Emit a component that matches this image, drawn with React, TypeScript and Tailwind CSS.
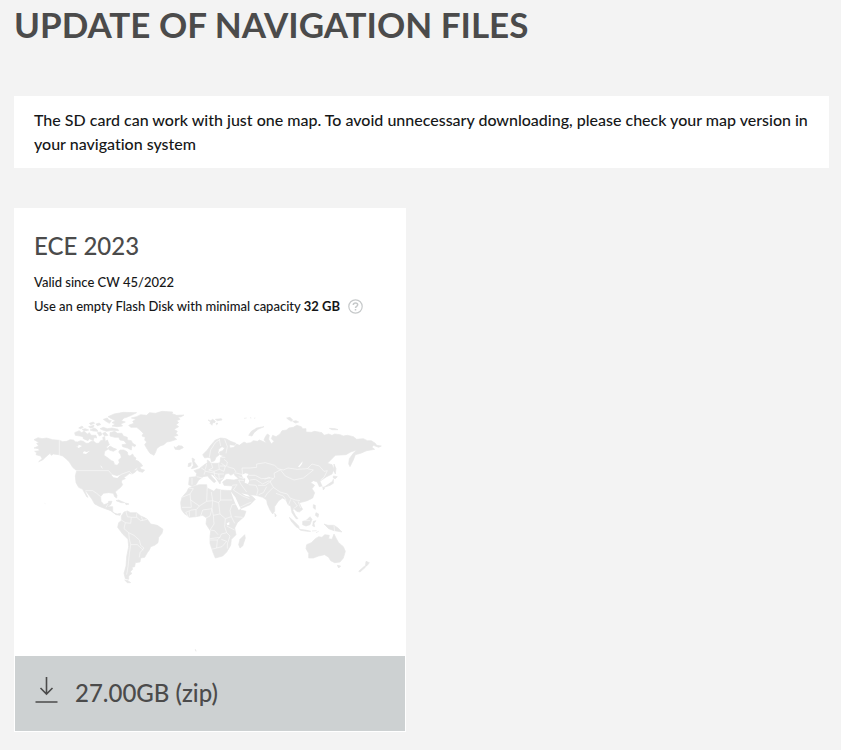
const land = [
  // Alaska, Canada
  "M42 119 L54 113 L66 116 L80 114 L98 119 L118 121 L128 125 L140 124 L150 119 L160 120 L166 125 L172 126 L182 122 L190 124 L198 130 L205 130 L214 124 L222 124 L228 130 L236 130 L242 122 L250 120 L248 112 L254 110 L256 124 L262 120 L268 134 L258 142 L266 146 L254 154 L252 166 L264 174 L274 182 L280 184 L284 194 L292 196 L298 188 L296 180 L304 172 L302 164 L296 156 L300 150 L312 150 L322 156 L324 166 L330 168 L338 162 L342 170 L348 174 L346 180 L356 184 L364 192 L368 198 L350 204 L338 212 L350 210 L346 216 L336 222 L328 220 L322 226 L312 232 L316 236 L306 240 L304 246 L308 254 L302 262 L292 270 L286 276 L291 286 L290 294 L284 290 L280 280 L266 278 L250 280 L242 290 L243 304 L252 314 L264 310 L266 304 L276 304 L272 314 L262 320 L278 320 L278 334 L284 340 L292 342 L302 340 L300 346 L288 344 L272 332 L256 326 L240 320 L224 312 L216 298 L200 276 L194 272 L204 292 L200 290 L188 268 L176 262 L168 248 L166 228 L170 212 L158 202 L148 186 L138 176 L128 168 L116 164 L100 162 L94 166 L90 160 L78 170 L68 180 L56 185 L66 176 L62 168 L48 164 L50 158 L44 154 L58 152 L56 146 L42 144 L56 138 L50 130 L58 128Z",
  // Arctic islands
  "M164 98 L178 92 L184 98 L192 94 L202 102 L198 108 L204 112 L190 110 L180 108 L166 106Z",
  "M188 104 L198 106 L208 98 L214 106 L228 106 L230 114 L222 112 L220 122 L208 116 L204 122 L190 116Z",
  "M176 84 L186 78 L190 82 L182 86Z",
  "M186 88 L196 86 L206 90 L194 93Z",
  "M206 80 L222 76 L220 82 L212 84Z",
  "M210 90 L222 84 L230 88 L234 94 L220 93Z",
  "M208 70 L220 66 L224 70 L212 74Z",
  "M228 72 L238 69 L242 74 L232 77Z",
  "M240 86 L250 82 L262 86 L276 84 L294 88 L296 92 L276 91 L260 94 L248 90Z",
  "M248 100 L256 97 L264 106 L254 108Z",
  "M232 98 L242 96 L246 104 L238 108Z",
  "M250 58 L262 54 L266 60 L274 62 L268 70 L258 64Z",
  "M264 50 L282 42 L310 37 L350 38 L334 46 L320 52 L312 54 L304 62 L316 66 L302 72 L308 78 L292 80 L276 78 L286 72 L276 68 L286 62 L274 56Z",
  "M270 98 L284 94 L292 100 L306 100 L310 108 L322 112 L322 120 L334 122 L338 130 L348 136 L344 140 L336 136 L334 150 L322 144 L308 140 L306 134 L320 132 L312 122 L300 120 L296 112 L284 112 L270 108Z",
  "M264 144 L270 138 L280 144 L290 148 L280 154 L268 150Z",
  "M350 208 L358 198 L364 208 L374 210 L368 217 L356 214Z",
  "M74 310 L76 311",
  // Greenland, Iceland
  "M326 76 L342 70 L338 64 L348 58 L334 54 L350 50 L362 44 L380 46 L388 38 L406 40 L426 34 L458 36 L456 41 L470 46 L492 45 L484 50 L474 52 L480 58 L470 62 L476 68 L468 74 L476 80 L462 88 L472 94 L468 100 L474 106 L460 110 L470 118 L452 124 L440 126 L432 134 L420 138 L410 146 L408 154 L402 166 L390 160 L382 148 L374 134 L380 126 L374 120 L376 112 L366 108 L370 100 L360 90 L350 82 L332 82Z",
  "M462 140 L468 143 L474 137 L486 138 L490 143 L478 149 L466 148Z",
  // Caribbean
  "M288 302 L296 300 L304 304 L314 308 L304 308Z",
  "M316 309 L327 312 L318 314Z",
  // South America
  "M304 348 L312 336 L322 333 L332 338 L350 338 L362 348 L372 352 L382 358 L392 372 L412 376 L429 388 L426 400 L416 412 L414 428 L404 436 L392 440 L388 450 L382 458 L374 472 L362 474 L360 486 L346 488 L344 500 L336 502 L338 508 L330 516 L336 520 L326 528 L326 538 L316 536 L312 520 L318 498 L320 470 L326 440 L324 418 L308 402 L293 382 L296 368 L304 362Z",
  "M314 540 L324 542 L332 548 L322 548Z",
  // Africa
  "M482 308 L486 292 L500 276 L506 264 L516 260 L538 254 L560 254 L562 264 L582 274 L588 266 L604 270 L634 272 L638 284 L652 308 L662 330 L678 334 L672 350 L652 368 L644 384 L648 404 L634 418 L632 436 L620 456 L608 468 L586 474 L580 460 L570 430 L570 408 L572 394 L558 372 L560 354 L548 346 L528 350 L508 352 L492 340 L484 328Z",
  "M674 404 L676 414 L668 438 L660 444 L656 434 L660 418Z",
  // Eurasia
  "M506 254 L508 232 L528 230 L530 220 L522 212 L538 206 L548 198 L556 192 L562 190 L562 180 L568 184 L572 190 L592 190 L600 188 L602 172 L612 168 L600 164 L598 156 L608 152 L614 144 L606 140 L596 148 L594 158 L598 164 L588 172 L584 182 L574 186 L572 174 L564 172 L554 174 L548 164 L562 150 L572 136 L586 120 L602 114 L618 116 L632 124 L648 130 L644 136 L628 134 L630 144 L642 142 L650 132 L658 136 L672 126 L680 130 L692 128 L700 122 L712 124 L718 120 L728 124 L740 130 L732 120 L736 110 L742 102 L748 106 L746 118 L754 132 L762 124 L754 116 L758 106 L768 110 L780 102 L786 92 L800 90 L806 84 L820 82 L830 76 L844 80 L848 86 L858 86 L858 96 L874 97 L884 94 L906 98 L912 106 L926 102 L936 106 L944 102 L960 104 L970 108 L982 106 L1000 110 L1010 118 L1030 116 L1042 122 L1054 122 L1066 130 L1070 136 L1084 138 L1076 142 L1060 136 L1056 142 L1064 148 L1040 152 L1022 160 L1006 164 L1000 180 L990 200 L986 192 L988 176 L1000 160 L1010 150 L992 156 L978 164 L946 166 L930 182 L922 190 L936 194 L942 208 L936 222 L920 230 L908 238 L900 244 L906 258 L898 260 L892 246 L880 242 L872 248 L884 256 L876 266 L884 278 L878 294 L862 302 L848 306 L838 308 L842 318 L848 328 L838 336 L830 334 L822 326 L818 330 L826 346 L834 356 L828 356 L816 338 L812 318 L804 314 L798 300 L788 294 L776 302 L764 320 L764 334 L758 342 L750 330 L742 312 L740 300 L728 292 L708 286 L690 284 L700 292 L706 298 L690 314 L658 328 L650 312 L636 288 L634 272 L638 258 L612 256 L608 246 L620 238 L642 240 L656 236 L644 226 L642 220 L632 226 L626 220 L616 222 L610 236 L602 244 L600 252 L592 240 L586 232 L578 224 L570 222 L576 230 L588 244 L582 248 L570 236 L562 228 L550 230 L536 240 L528 254 L516 258Z",
  // British Isles
  "M516 174 L524 178 L522 184 L528 192 L534 200 L524 204 L514 206 L520 196 L518 186Z",
  "M506 190 L514 188 L512 198 L504 200Z",
  // Arctic Eurasia
  "M564 60 L572 62 L578 58 L586 64 L584 68 L578 68 L576 76 L570 70 L572 66Z",
  "M586 58 L604 56 L606 60 L592 62Z",
  "M588 70 L594 70 L590 74Z",
  "M686 106 L694 94 L710 84 L732 80 L714 88 L702 98 L696 108Z",
  "M800 54 L810 52 L818 60 L814 64 L804 58Z",
  "M818 64 L828 62 L836 66 L826 69Z",
  "M928 85 L946 86 L954 89 L936 89Z",
  "M672 55 L680 54 M690 53 L694 54 M702 55 L706 54",
  // Japan, Sakhalin
  "M942 192 L948 206 L946 222 L942 214Z",
  "M940 228 L952 230 L946 236 L940 234Z",
  "M940 238 L940 250 L930 256 L912 262 L926 252 L938 244Z",
  "M908 260 L914 264 L910 270Z",
  // South-east Asia
  "M808 352 L822 364 L836 378 L838 386 L828 380 L814 364Z",
  "M838 388 L856 390 L872 394 L862 394 L842 391Z",
  "M848 364 L860 360 L870 350 L876 358 L870 374 L858 378 L848 374Z",
  "M880 364 L888 362 L882 370 L884 380 L878 378Z",
  "M880 314 L886 316 L886 328 L880 324Z",
  "M888 338 L896 342 L894 352 L886 346Z",
  "M876 393 L890 392 M896 394 L888 398",
  "M912 372 L924 376 L942 376 L954 384 L966 396 L954 394 L942 392 L926 386Z",
  "M764 340 L769 346 L766 351Z",
  // Australia, New Zealand
  "M860 434 L874 428 L886 416 L896 410 L906 412 L914 404 L928 406 L926 416 L936 418 L942 402 L948 414 L956 428 L970 440 L976 454 L970 474 L960 486 L944 488 L932 482 L926 472 L914 464 L896 468 L880 474 L866 474 L866 460 L858 446Z",
  "M952 496 L962 498 L956 504Z",
  "M1038 484 L1048 488 L1042 496 L1036 500Z",
  "M1034 498 L1036 502 L1020 516 L1016 514Z",
];

// Inland and enclosed seas, cut out of the land
const water = [
  "M666 224 L676 220 L686 222 L680 230 L688 242 L684 252 L674 248 L676 236 L668 232Z",
  "M632 274 L646 292 L662 326 L656 330 L644 306Z",
  "M664 280 L678 288 L690 290 L684 284Z",
  "M168 138 L174 140 L176 134 L186 138 L176 144Z",
  "M188 160 L192 154 L200 156 L210 152 L198 162Z",
  "M274 224 L290 228 L300 226 L292 234 L280 232Z",
  "M240 196 L246 200 L248 208Z",
  "M834 200 L848 184 L846 192 L838 202Z",
  "M620 370 L628 366 L628 374 L622 376Z",
];

const borders = [
  // Americas
  "M118 118 V166 M168 212 H266 L276 224 L292 230 L306 222 L328 214 L336 222",
  "M196 272 L218 272 L230 280 L242 290 M258 322 L264 312",
  "M318 334 L322 350 L334 352 L332 370 L316 368 L304 360 M334 352 L350 352 L350 340 M350 352 L362 362 L382 358 M364 350 L368 362",
  "M316 368 L312 386 L326 398 L328 416 M326 398 L342 406 L358 420 L362 436 L372 444 L360 458 L358 472 M328 416 L332 434 L352 434 L370 450 M332 434 L328 462 L324 500 L320 524",
  // Africa
  "M506 264 L520 266 L510 282 L486 292 M510 282 L512 300 L538 318 L560 304 L562 256 M512 300 L514 322 L486 322 M538 318 L530 328 L514 330 L496 338 M574 276 L578 302 L560 304 M602 270 V300 H636 M602 300 L596 308 L578 302 L576 326 L548 330 M548 330 L542 348 M576 326 L570 348 L558 354 M576 326 L580 346 L600 342 L596 308 M600 342 L616 356 L634 350 L630 332 L636 314 L648 312 M634 350 L644 370 M616 356 L614 380 L620 398 L604 402 L600 412 L570 416 M580 346 L582 372 L570 390 L584 392 L594 404 M644 350 L668 352 M620 378 L644 390 M600 412 L592 420 H570 M592 420 L590 444 L574 448 M590 444 L606 440 L620 424 L604 418 M620 398 L630 408 L622 432 L622 446 M508 334 V350 M528 330 V350 M498 338 L504 350",
  // Europe
  "M516 234 V254 M530 230 L548 234 M544 204 L556 212 L552 224 M560 192 L556 208 M574 190 L578 204 L566 210 L582 214 L598 208 L596 190 M556 214 L578 218 L594 222 L612 222 M598 208 L612 214 L616 198 L604 190 M612 178 L622 186 L620 198 L600 198 M622 200 L642 206 L648 216 M582 214 L584 228 L596 238 M596 222 L598 238 L610 234 M568 172 L572 150 L586 128 L600 118 M598 118 L602 138 M614 118 L622 140 L618 160 M604 172 L616 172",
  // Asia
  "M644 218 L668 224 L666 204 L690 204 L710 202 L710 192 L736 188 L764 196 L774 206 L790 210 L804 204 L832 208 L862 206 L880 210 L868 220 L850 234 L822 240 L796 228 L780 208 M862 206 L876 192 L898 198 L912 214 L922 212 L912 232 L902 240",
  "M780 210 L762 220 L764 232 L750 244 L760 262 L780 276 L802 282 L810 294 L826 300 L840 302 M686 226 L706 226 L724 236 L750 234 M690 240 L706 238 L728 252 L748 242 M686 254 L708 256 L714 270 L710 286 M714 256 L736 256 L752 244 M740 260 L730 278 L716 284 M760 262 L742 280 L734 292 M768 280 L790 288 L798 300 M734 238 L746 232 L760 236",
  "M656 240 L662 252 L680 276 M636 256 L652 254 M650 256 L640 270 L668 288 L688 296 M660 322 L676 314 L694 306 M656 240 L672 242 M656 230 L672 236 M812 298 L806 314 M820 302 L832 318 L820 326 M834 304 L842 324",
  "M942 376 L944 396 M848 362 L870 362",
];

function WorldMap() {
  return (
    <svg viewBox="42 24 1056 744" className="w-full" aria-hidden="true">
      <g fill="#e7e7e7" stroke="#e7e7e7" strokeWidth="2" strokeLinejoin="round">
        {land.map((d) => (
          <path key={d} d={d} />
        ))}
        <path d="M526 748 L528 754" strokeWidth="3" />
      </g>
      <g fill="#fff">
        {water.map((d) => (
          <path key={d} d={d} />
        ))}
      </g>
      <g fill="none" stroke="#fff" strokeWidth="2" strokeOpacity="0.75" strokeLinejoin="round">
        {borders.map((d) => (
          <path key={d} d={d} />
        ))}
      </g>
    </svg>
  );
}

function HelpIcon() {
  return (
    <svg width="15" height="15" viewBox="0 0 15 15" fill="none" stroke="#c6c9ca" aria-hidden="true">
      <circle cx="7.5" cy="7.5" r="6.7" strokeWidth="1.2" />
      <path d="M5.3 6C5.3 4.6 6.3 3.9 7.5 3.9C8.8 3.9 9.7 4.7 9.7 5.8C9.7 7.3 7.5 7.3 7.5 9M7.5 10V11.5" strokeWidth="1.5" />
    </svg>
  );
}

function DownloadIcon() {
  return (
    <svg width="24" height="32" viewBox="0 0 24 32" fill="none" stroke="#4b4b4b" strokeWidth="1.6" aria-hidden="true">
      <path d="M11.5 0V17M5.5 11L11.5 17L17.5 11M.5 25H22.5" />
    </svg>
  );
}

export default function App() {
  return (
    <main className="min-h-screen bg-[#f3f3f3] pr-3 pb-5 pl-3.5 font-['Lato',sans-serif] text-[#161718] [font-variant-ligatures:no-common-ligatures]">
      <h1 className="pt-1 text-[35px] leading-10 font-bold text-[#4b4b4b]">UPDATE OF NAVIGATION FILES</h1>

      <p className="mt-[52px] bg-white px-5 py-3 text-base leading-6 font-medium">
        The SD card can work with just one map. To avoid unnecessary downloading, please check your map version in
        your navigation system
      </p>

      <section className="mt-10 w-[392px] max-w-full bg-white">
        <div className="px-5 pt-[22px]">
          <h2 className="text-2xl leading-8 font-medium text-[#4b4b4b]">ECE 2023</h2>
          <p className="mt-2 text-[13px] leading-6 font-medium">Valid since CW 45/2022</p>
          <p className="flex items-center text-[13px] leading-6 font-medium">
            <span>
              Use an empty Flash Disk with minimal capacity <strong className="font-bold">32 GB</strong>
            </span>
            <button type="button" aria-label="Help" className="ml-2">
              <HelpIcon />
            </button>
          </p>
          <div className="mt-[90px]">
            <WorldMap />
          </div>
        </div>
        <a
          href="#download"
          className="mx-px flex h-[76px] items-center gap-4 border-b border-white bg-[#cdd1d2] px-5 pb-0.5 text-2xl font-medium text-[#4b4b4b]"
        >
          <DownloadIcon />
          <span>27.00GB (zip)</span>
        </a>
      </section>
    </main>
  );
}
